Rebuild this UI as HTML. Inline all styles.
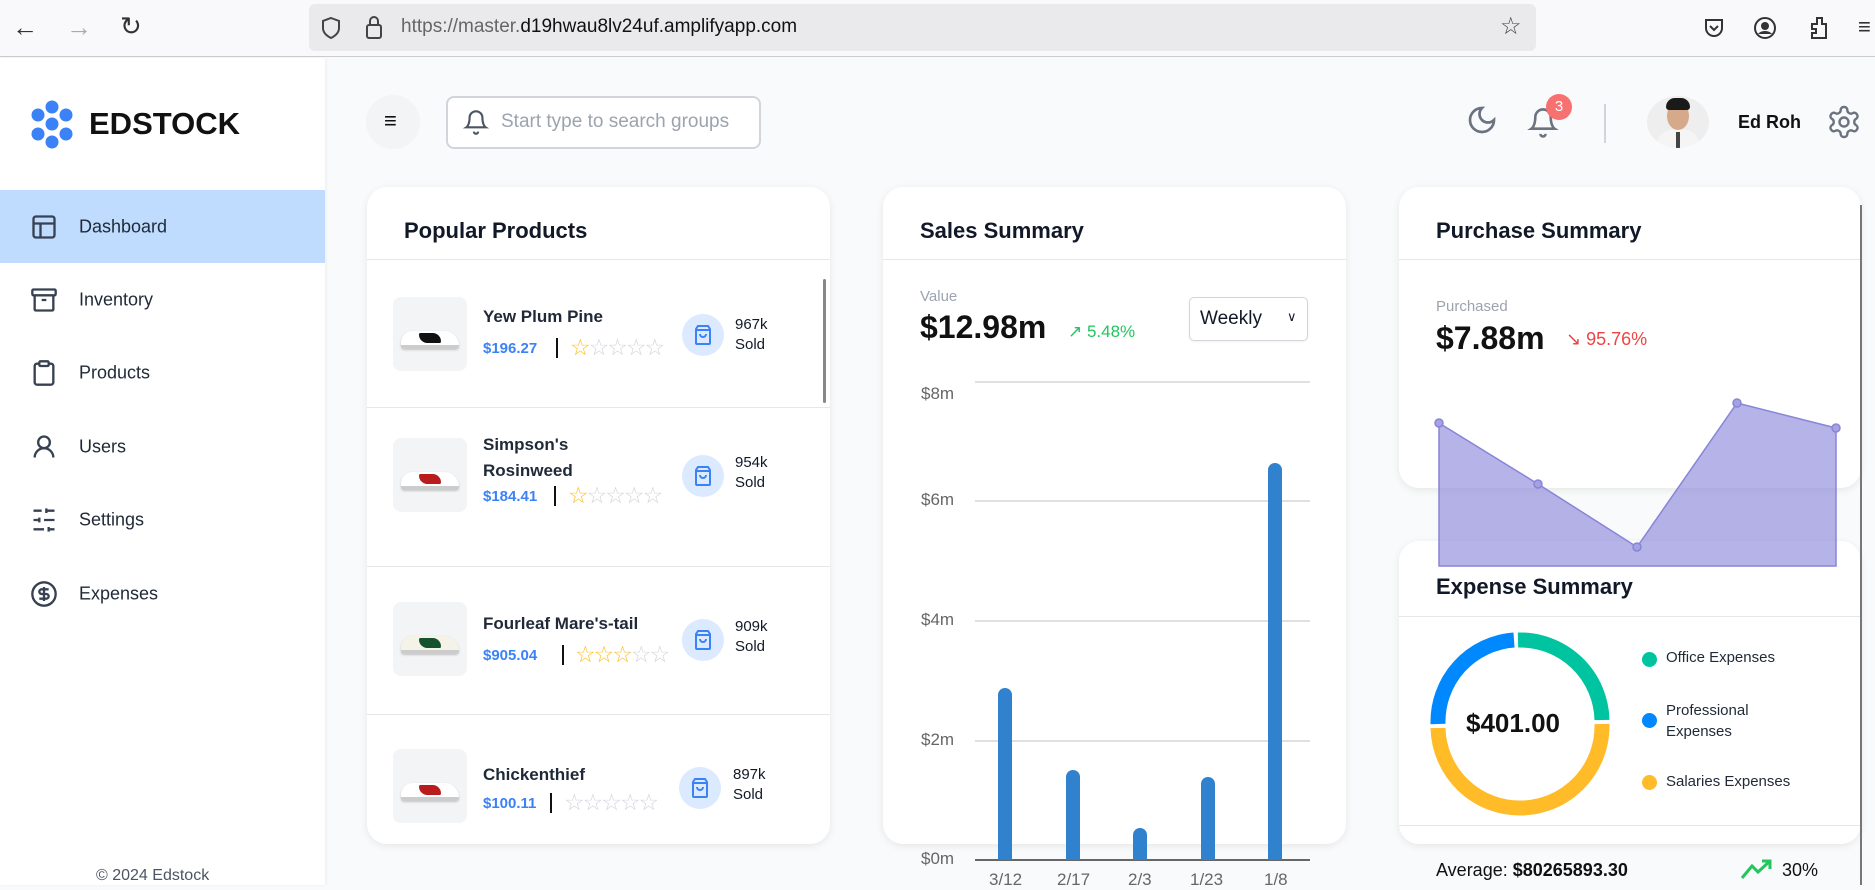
<!DOCTYPE html>
<html><head><meta charset="utf-8"><style>
*{box-sizing:border-box;margin:0;padding:0}
body{width:1875px;height:885px;overflow:hidden;background:#f9fafb;font-family:"Liberation Sans",sans-serif;position:relative;color:#111827}
.abs{position:absolute}
.card{position:absolute;background:#fff;border-radius:20px;box-shadow:0 2px 8px rgba(0,0,0,.08);overflow:hidden}
.h{position:absolute;font-weight:bold;font-size:22px;color:#111827}
.div{position:absolute;left:0;right:0;height:1px;background:#e5e7eb}
.nav{position:absolute;left:0;width:325px;height:73px}
.nav span{position:absolute;left:79px;top:50%;transform:translateY(-50%);font-size:18px;color:#1f2937}
.nav svg{position:absolute;left:30px;top:50%;transform:translateY(-50%)}
.prow{position:absolute;left:0;width:387px}
.img{position:absolute;left:26px;width:74px;height:74px;border-radius:8px;background:#f3f4f6;overflow:hidden}
.img i{position:absolute;left:8px;top:34px;width:58px;height:18px;background:#fff;border-radius:14px 18px 4px 4px;border-bottom:4px solid #ccc;box-shadow:0 1px 2px rgba(0,0,0,.2)}
.img em{position:absolute;left:26px;top:36px;width:22px;height:10px;border-radius:2px 10px 2px 10px}
.pn{position:absolute;left:116px;font-weight:bold;font-size:17px;color:#1f2937;line-height:26px}
.pp{position:absolute;left:116px;font-weight:bold;font-size:15px;color:#3b82f6}
.cart{position:absolute;left:315px;width:42px;height:42px;border-radius:50%;background:#dbeafe}
.cart svg{position:absolute;left:11px;top:10px}
.sold{position:absolute;left:368px;font-size:15px;line-height:20px;color:#111827}
.stars{position:absolute;font-size:23px;line-height:23px;letter-spacing:-2px;color:#d1d5db;font-family:"DejaVu Sans",sans-serif}
.stars b{color:#fbbf24;font-weight:normal}
.bar{position:absolute;width:14px;background:#3182ce;border-radius:7px 7px 0 0}
.gl{position:absolute;left:975px;width:335px;height:2px;background:#e0e0e0}
.yl{position:absolute;left:921px;font-size:17px;color:#666}
</style></head><body>
<!-- browser bar -->
<div class="abs" style="left:0;top:0;width:1875px;height:57px;background:#f9f9fb;border-bottom:1px solid #ccc"></div>
<div class="abs" style="left:12px;top:12px;font-size:26px;color:#333">&#8592;</div>
<div class="abs" style="left:66px;top:12px;font-size:26px;color:#aaa">&#8594;</div>
<div class="abs" style="left:120px;top:11px;font-size:26px;color:#333">&#8635;</div>
<div class="abs" style="left:309px;top:4px;width:1227px;height:47px;border-radius:6px;background:#eaeaed"></div>
<svg class="abs" style="left:320px;top:16px" width="22" height="24" viewBox="0 0 22 24"><path d="M11 2 L19 5 V12 C19 17 15 20 11 22 C7 20 3 17 3 12 V5 Z" fill="none" stroke="#444" stroke-width="2"/></svg>
<svg class="abs" style="left:364px;top:14px" width="20" height="26" viewBox="0 0 20 26"><rect x="3" y="11" width="14" height="13" rx="2" fill="none" stroke="#444" stroke-width="2"/><path d="M6 11V7a4 4 0 0 1 8 0v4" fill="none" stroke="#444" stroke-width="2"/></svg>
<div class="abs" style="left:401px;top:16px;font-size:19px;color:#666">https://master.<span style="color:#111">d19hwau8lv24uf.amplifyapp.com</span></div>
<div class="abs" style="left:1500px;top:12px;font-size:24px;color:#444">&#9734;</div>
<svg class="abs" style="left:1703px;top:17px" width="22" height="22" viewBox="0 0 22 22"><path d="M3 3h16v8a8 8 0 0 1-16 0z" fill="none" stroke="#333" stroke-width="2"/><path d="M7 9l4 4 4-4" fill="none" stroke="#333" stroke-width="2"/></svg>
<svg class="abs" style="left:1753px;top:16px" width="24" height="24"><circle cx="12" cy="12" r="10" fill="none" stroke="#333" stroke-width="2"/><circle cx="12" cy="10" r="4" fill="#333"/><path d="M5 18c3-4 11-4 14 0" fill="#333"/></svg>
<svg class="abs" style="left:1808px;top:14px" width="22" height="28"><path d="M4 10h5V4h5v6h4v14H4v-5h4v-4H4z" fill="none" stroke="#333" stroke-width="2"/></svg>
<div class="abs" style="left:1858px;top:14px;font-size:22px;color:#333">&#8801;</div>

<!-- sidebar -->
<div class="abs" style="left:0;top:58px;width:325px;height:827px;background:#fff;box-shadow:1px 0 3px rgba(0,0,0,.05)"></div>
<svg class="abs" style="left:30px;top:100px" width="44" height="50" viewBox="0 0 44 50">
<g fill="#3b82f6"><circle cx="22" cy="7" r="6.5"/><circle cx="8" cy="15" r="6.5"/><circle cx="36" cy="15" r="6.5"/><circle cx="22" cy="24" r="6.5"/><circle cx="8" cy="34" r="6.5"/><circle cx="36" cy="34" r="6.5"/><circle cx="22" cy="42" r="6.5"/></g></svg>
<div class="abs" style="left:89px;top:106px;font-size:31px;font-weight:bold;color:#111">EDSTOCK</div>
<div class="nav" style="top:190px;background:#bfdbfe"><svg width="28" height="28" viewBox="0 0 24 24" fill="none" stroke="#374151" stroke-width="2"><rect x="3" y="3" width="18" height="18" rx="2"/><path d="M3 9h18M9 9v12"/></svg><span>Dashboard</span></div>
<div class="nav" style="top:263px"><svg width="28" height="28" viewBox="0 0 24 24" fill="none" stroke="#374151" stroke-width="2"><rect x="2" y="3" width="20" height="5" rx="1"/><path d="M4 8v12a1 1 0 0 0 1 1h14a1 1 0 0 0 1-1V8M10 12h4"/></svg><span>Inventory</span></div>
<div class="nav" style="top:336px"><svg width="28" height="28" viewBox="0 0 24 24" fill="none" stroke="#374151" stroke-width="2"><rect x="8" y="2" width="8" height="4" rx="1"/><path d="M16 4h2a2 2 0 0 1 2 2v14a2 2 0 0 1-2 2H6a2 2 0 0 1-2-2V6a2 2 0 0 1 2-2h2"/></svg><span>Products</span></div>
<div class="nav" style="top:410px"><svg width="28" height="28" viewBox="0 0 24 24" fill="none" stroke="#374151" stroke-width="2"><circle cx="12" cy="8" r="5"/><path d="M20 21a8 8 0 0 0-16 0"/></svg><span>Users</span></div>
<div class="nav" style="top:483px"><svg width="28" height="28" viewBox="0 0 24 24" fill="none" stroke="#374151" stroke-width="2"><path d="M21 4h-7M10 4H3M21 12h-9M8 12H3M21 20h-5M12 20H3M14 2v4M8 10v4M16 18v4"/></svg><span>Settings</span></div>
<div class="nav" style="top:557px"><svg width="28" height="28" viewBox="0 0 24 24" fill="none" stroke="#374151" stroke-width="2"><circle cx="12" cy="12" r="10"/><path d="M16 8h-6a2 2 0 1 0 0 4h4a2 2 0 1 1 0 4H8M12 18V6"/></svg><span>Expenses</span></div>
<div class="abs" style="left:96px;top:867px;font-size:16px;color:#4b5563">© 2024 Edstock</div>

<!-- top bar -->
<div class="abs" style="left:366px;top:95px;width:54px;height:54px;border-radius:50%;background:#f3f4f6"></div>
<div class="abs" style="left:384px;top:108px;font-size:22px;color:#111">&#8801;</div>
<div class="abs" style="left:446px;top:96px;width:315px;height:53px;border:2px solid #d1d5db;border-radius:8px;background:#fff"></div>
<svg class="abs" style="left:463px;top:107px" width="26" height="30" viewBox="0 0 24 28" fill="none" stroke="#4b5563" stroke-width="2"><path d="M6 10a6 6 0 0 1 12 0c0 7 3 9 3 9H3s3-2 3-9M10 23a2 2 0 0 0 4 0"/></svg>
<div class="abs" style="left:501px;top:111px;font-size:19px;color:#9ca3af">Start type to search groups</div>
<svg class="abs" style="left:1466px;top:103px" width="32" height="34" viewBox="0 0 24 24" fill="none" stroke="#6b7280" stroke-width="2"><path d="M12 3a6 6 0 0 0 9 9 9 9 0 1 1-9-9z"/></svg>
<svg class="abs" style="left:1527px;top:103px" width="32" height="36" viewBox="0 0 24 28" fill="none" stroke="#6b7280" stroke-width="2"><path d="M6 11a6 6 0 0 1 12 0c0 7 3 9 3 9H3s3-2 3-9M10 24a2 2 0 0 0 4 0"/></svg>
<div class="abs" style="left:1546px;top:94px;width:26px;height:26px;border-radius:50%;background:#f87171;color:#fff;font-size:15px;text-align:center;line-height:26px">3</div>
<div class="abs" style="left:1604px;top:104px;width:2px;height:39px;background:#d1d5db"></div>
<div class="abs" style="left:1647px;top:96px;width:62px;height:52px;border-radius:50%;background:#eee;overflow:hidden"><div style="position:absolute;left:20px;top:6px;width:22px;height:28px;border-radius:50%;background:#d6a98a"></div><div style="position:absolute;left:19px;top:2px;width:24px;height:12px;border-radius:12px 12px 4px 4px;background:#1a1a1a"></div><div style="position:absolute;left:10px;top:34px;width:42px;height:30px;border-radius:14px 14px 0 0;background:#f5f5f5"></div><div style="position:absolute;left:29px;top:36px;width:4px;height:16px;background:#444"></div></div>
<div class="abs" style="left:1738px;top:112px;font-size:18px;font-weight:bold;color:#111">Ed Roh</div>
<svg class="abs" style="left:1826px;top:104px" width="36" height="36" viewBox="0 0 24 24" fill="none" stroke="#6b7280" stroke-width="1.6"><path d="M12.22 2h-.44a2 2 0 0 0-2 2v.18a2 2 0 0 1-1 1.730l-.43.25a2 2 0 0 1-2 0l-.15-.08a2 2 0 0 0-2.73.73l-.22.38a2 2 0 0 0 .73 2.73l.15.1a2 2 0 0 1 1 1.72v.51a2 2 0 0 1-1 1.74l-.15.09a2 2 0 0 0-.73 2.73l.22.38a2 2 0 0 0 2.73.73l.15-.08a2 2 0 0 1 2 0l.43.25a2 2 0 0 1 1 1.73V20a2 2 0 0 0 2 2h.44a2 2 0 0 0 2-2v-.18a2 2 0 0 1 1-1.73l.43-.25a2 2 0 0 1 2 0l.15.08a2 2 0 0 0 2.73-.73l.22-.39a2 2 0 0 0-.73-2.73l-.15-.08a2 2 0 0 1-1-1.74v-.5a2 2 0 0 1 1-1.74l.15-.09a2 2 0 0 0 .73-2.730l-.22-.38a2 2 0 0 0-2.73-.73l-.15.08a2 2 0 0 1-2 0l-.43-.25a2 2 0 0 1-1-1.73V4a2 2 0 0 0-2-2z"/><circle cx="12" cy="12" r="3"/></svg>

<!-- Popular products -->
<div class="card" style="left:367px;top:187px;width:463px;height:657px">
<div class="h" style="left:37px;top:31px">Popular Products</div>
<div class="div" style="top:72px"></div>
<div class="abs" style="left:456px;top:92px;width:3px;height:124px;background:#888;border-radius:2px"></div>
<div class="prow" style="top:73px"><div class="img" style="top:37px"><i></i><em style="background:#111"></em></div><div class="pn" style="top:44px">Yew Plum Pine</div><div class="pp" style="top:80px">$196.27</div><div class="abs" style="left:189px;top:78px;width:2px;height:20px;background:#111"></div><div class="stars" style="left:203px;top:77px"><b>☆</b>☆☆☆☆</div><div class="cart" style="top:54px"><svg width="20" height="22" viewBox="0 0 20 22" fill="none" stroke="#3b82f6" stroke-width="2"><path d="M3 5l2-3h10l2 3v14a1 1 0 0 1-1 1H4a1 1 0 0 1-1-1zM3 6h14M7 10a3 3 0 0 0 6 0"/></svg></div><div class="sold" style="top:55px">967k<br>Sold</div></div>
<div class="div" style="top:220px"></div>
<div class="prow" style="top:221px"><div class="img" style="top:30px"><i></i><em style="background:#b91c1c"></em></div><div class="pn" style="top:24px">Simpson's<br>Rosinweed</div><div class="pp" style="top:80px">$184.41</div><div class="abs" style="left:187px;top:78px;width:2px;height:20px;background:#111"></div><div class="stars" style="left:201px;top:77px"><b>☆</b>☆☆☆☆</div><div class="cart" style="top:47px"><svg width="20" height="22" viewBox="0 0 20 22" fill="none" stroke="#3b82f6" stroke-width="2"><path d="M3 5l2-3h10l2 3v14a1 1 0 0 1-1 1H4a1 1 0 0 1-1-1zM3 6h14M7 10a3 3 0 0 0 6 0"/></svg></div><div class="sold" style="top:45px">954k<br>Sold</div></div>
<div class="div" style="top:379px"></div>
<div class="prow" style="top:380px"><div class="img" style="top:35px"><i style="background:#f5f3e8"></i><em style="background:#14532d"></em></div><div class="pn" style="top:44px">Fourleaf Mare's-tail</div><div class="pp" style="top:80px">$905.04</div><div class="abs" style="left:195px;top:78px;width:2px;height:20px;background:#111"></div><div class="stars" style="left:208px;top:77px"><b>☆☆☆</b>☆☆</div><div class="cart" style="top:52px"><svg width="20" height="22" viewBox="0 0 20 22" fill="none" stroke="#3b82f6" stroke-width="2"><path d="M3 5l2-3h10l2 3v14a1 1 0 0 1-1 1H4a1 1 0 0 1-1-1zM3 6h14M7 10a3 3 0 0 0 6 0"/></svg></div><div class="sold" style="top:50px">909k<br>Sold</div></div>
<div class="div" style="top:527px"></div>
<div class="prow" style="top:528px"><div class="img" style="top:34px"><i></i><em style="background:#b91c1c"></em></div><div class="pn" style="top:47px">Chickenthief</div><div class="pp" style="top:80px">$100.11</div><div class="abs" style="left:183px;top:78px;width:2px;height:20px;background:#111"></div><div class="stars" style="left:197px;top:77px">☆☆☆☆☆</div><div class="cart" style="top:52px;left:312px"><svg width="20" height="22" viewBox="0 0 20 22" fill="none" stroke="#3b82f6" stroke-width="2"><path d="M3 5l2-3h10l2 3v14a1 1 0 0 1-1 1H4a1 1 0 0 1-1-1zM3 6h14M7 10a3 3 0 0 0 6 0"/></svg></div><div class="sold" style="top:50px;left:366px">897k<br>Sold</div></div>
</div>

<!-- Sales summary -->
<div class="card" style="left:883px;top:187px;width:463px;height:657px">
<div class="h" style="left:37px;top:31px">Sales Summary</div>
<div class="div" style="top:72px"></div>
<div class="abs" style="left:37px;top:101px;font-size:15px;color:#9ca3af">Value</div>
<div class="abs" style="left:37px;top:122px;font-size:32px;font-weight:bold;color:#111">$12.98m</div>
<div class="abs" style="left:185px;top:135px;font-size:17px;color:#22c55e">&#8599; 5.48%</div>
<div class="abs" style="left:306px;top:110px;width:119px;height:44px;border:1px solid #d1d5db;border-radius:5px;box-shadow:0 1px 2px rgba(0,0,0,.05)"><span style="position:absolute;left:10px;top:10px;font-size:19px">Weekly</span><span style="position:absolute;left:97px;top:11px;font-size:13px">&#8744;</span></div>
</div>
<div class="gl" style="top:381px"></div><div class="gl" style="top:500px"></div><div class="gl" style="top:620px"></div><div class="gl" style="top:740px"></div>
<div class="abs" style="left:975px;top:859px;width:335px;height:2px;background:#666"></div>
<div class="yl" style="top:384px">$8m</div><div class="yl" style="top:490px">$6m</div><div class="yl" style="top:610px">$4m</div><div class="yl" style="top:730px">$2m</div><div class="yl" style="top:849px">$0m</div>
<div class="bar" style="left:998px;top:688px;height:172px"></div>
<div class="bar" style="left:1066px;top:770px;height:90px"></div>
<div class="bar" style="left:1133px;top:828px;height:32px"></div>
<div class="bar" style="left:1201px;top:777px;height:83px"></div>
<div class="bar" style="left:1268px;top:463px;height:397px"></div>
<div class="abs" style="left:989px;top:870px;font-size:17px;color:#666">3/12</div>
<div class="abs" style="left:1057px;top:870px;font-size:17px;color:#666">2/17</div>
<div class="abs" style="left:1128px;top:870px;font-size:17px;color:#666">2/3</div>
<div class="abs" style="left:1190px;top:870px;font-size:17px;color:#666">1/23</div>
<div class="abs" style="left:1264px;top:870px;font-size:17px;color:#666">1/8</div>

<!-- Purchase summary -->
<div class="card" style="left:1399px;top:187px;width:462px;height:301px">
<div class="h" style="left:37px;top:31px">Purchase Summary</div>
<div class="div" style="top:72px"></div>
<div class="abs" style="left:37px;top:111px;font-size:15px;color:#9ca3af">Purchased</div>
<div class="abs" style="left:37px;top:133px;font-size:32px;font-weight:bold;color:#111">$7.88m</div>
<div class="abs" style="left:167px;top:142px;font-size:18px;color:#ef4444">&#8600; 95.76%</div>
</div>
<!-- Expense summary -->
<div class="card" style="left:1399px;top:541px;width:462px;height:303px">
<div class="h" style="left:37px;top:33px">Expense Summary</div>
<div class="div" style="top:75px"></div>
<div class="div" style="top:284px"></div>
<div class="abs" style="left:243px;top:111px;width:15px;height:15px;border-radius:50%;background:#00c49f"></div>
<div class="abs" style="left:267px;top:108px;font-size:15px;color:#1f2937">Office Expenses</div>
<div class="abs" style="left:243px;top:172px;width:15px;height:15px;border-radius:50%;background:#0088fe"></div>
<div class="abs" style="left:267px;top:159px;font-size:15px;line-height:21px;color:#1f2937">Professional<br>Expenses</div>
<div class="abs" style="left:243px;top:234px;width:15px;height:15px;border-radius:50%;background:#ffbb28"></div>
<div class="abs" style="left:267px;top:232px;font-size:15px;color:#1f2937">Salaries Expenses</div>
<div class="abs" style="left:67px;top:167px;font-size:26px;font-weight:bold;color:#111">$401.00</div>
</div>
<svg class="abs" style="left:1420px;top:622px" width="200" height="200" viewBox="-100 -100 200 200">
<g fill="none" stroke-width="15">
<path d="M-2 -82 A82 82 0 0 1 82 -2" stroke="#00c49f"/>
<path d="M82 2 A82 82 0 1 1 -82 6" stroke="#ffbb28"/>
<path d="M-82 2 A82 82 0 0 1 -6 -82" stroke="#0088fe"/>
</g></svg>
<div class="abs" style="left:1436px;top:860px;font-size:18px;color:#111">Average: <b>$80265893.30</b></div>
<svg class="abs" style="left:1740px;top:858px" width="34" height="22" viewBox="0 0 34 22" fill="none" stroke="#22c55e" stroke-width="3"><path d="M2 20 L12 8 L18 14 L30 3 M22 3 H30 V11"/></svg>
<div class="abs" style="left:1782px;top:860px;font-size:18px;color:#111">30%</div>

<!-- area chart overlay -->
<svg class="abs" style="left:0;top:0" width="1875" height="885">
<path d="M1439 423 L1538 484 L1637 547 L1737 403 L1836 428 L1836 566 L1439 566 Z" fill="#8884d8" fill-opacity="0.62" stroke="#8884d8" stroke-width="1.5"/>
<g fill="#a5a2e2" stroke="#8884d8" stroke-width="1.5"><circle cx="1439" cy="423" r="4"/><circle cx="1538" cy="484" r="4"/><circle cx="1637" cy="547" r="4"/><circle cx="1737" cy="403" r="4"/><circle cx="1836" cy="428" r="4"/></g>
</svg>
<div class="abs" style="left:1860px;top:205px;width:2px;height:680px;background:#777"></div>
</body></html>
